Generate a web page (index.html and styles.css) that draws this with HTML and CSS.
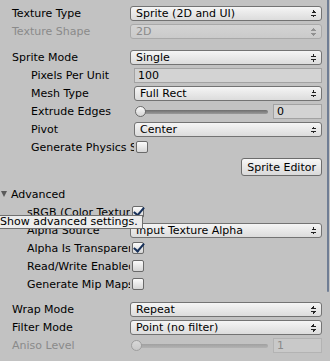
FILE: index.html
```html
<!DOCTYPE html>
<html lang="en">
<head>
  <meta charset="UTF-8">
  <title>Texture Import Settings</title>
  <link rel="stylesheet" href="styles.css">
</head>
<body>

<div class="inspector">
  <div class="row">
    <div class="label">Texture Type</div>
    <div class="popup">Sprite (2D and UI)<span class="arrows"></span></div>
  </div>
  <div class="row disabled">
    <div class="label">Texture Shape</div>
    <div class="popup">2D<span class="arrows"></span></div>
  </div>

  <div class="row gap">
    <div class="label">Sprite Mode</div>
    <div class="popup">Single<span class="arrows"></span></div>
  </div>
  <div class="row sub">
    <div class="label">Pixels Per Unit</div>
    <div class="field">100</div>
  </div>
  <div class="row sub">
    <div class="label">Mesh Type</div>
    <div class="popup">Full Rect<span class="arrows"></span></div>
  </div>
  <div class="row sub">
    <div class="label">Extrude Edges</div>
    <div class="slider"><span class="thumb"></span></div>
    <div class="field small">0</div>
  </div>
  <div class="row sub">
    <div class="label">Pivot</div>
    <div class="popup">Center<span class="arrows"></span></div>
  </div>
  <div class="row sub">
    <div class="label">Generate Physics Shape</div>
    <div class="check"></div>
  </div>
  <div class="button-row">
    <button class="btn">Sprite Editor</button>
  </div>

  <div class="foldout"><span class="tri"></span>Advanced</div>
  <div class="row adv">
    <div class="label">sRGB (Color Texture)</div>
    <div class="check on"></div>
  </div>
  <div class="row adv">
    <div class="label">Alpha Source</div>
    <div class="popup">Input Texture Alpha<span class="arrows"></span></div>
  </div>
  <div class="row adv">
    <div class="label">Alpha Is Transparency</div>
    <div class="check on"></div>
  </div>
  <div class="row adv">
    <div class="label">Read/Write Enabled</div>
    <div class="check"></div>
  </div>
  <div class="row adv">
    <div class="label">Generate Mip Maps</div>
    <div class="check"></div>
  </div>

  <div class="row gap2">
    <div class="label">Wrap Mode</div>
    <div class="popup">Repeat<span class="arrows"></span></div>
  </div>
  <div class="row">
    <div class="label">Filter Mode</div>
    <div class="popup">Point (no filter)<span class="arrows"></span></div>
  </div>
  <div class="row disabled">
    <div class="label">Aniso Level</div>
    <div class="slider"><span class="thumb"></span></div>
    <div class="field small">1</div>
  </div>

  <div class="tooltip">Show advanced settings.</div>
  <div class="scrollbar"></div>
</div>

</body>
</html>
```

FILE: styles.css
```css
* {
  box-sizing: border-box;
}

body {
  margin: 0;
  background: #c2c2c2;
  font-family: 'DejaVu Sans', Verdana, sans-serif;
  font-size: 11px;
  color: #000;
}

.inspector {
  position: relative;
  width: 330px;
  height: 361px;
  padding-top: 4px;
  overflow: hidden;
}

.row {
  display: flex;
  align-items: center;
  height: 18px;
  padding-right: 8px;
}

.row.gap {
  margin-top: 8px;
}

.row.gap2 {
  margin-top: 7px;
}

.label {
  flex: none;
  width: 130px;
  padding-left: 12px;
  white-space: nowrap;
  overflow: hidden;
}

.sub .label {
  width: 134px;
  padding-left: 31px;
}

.adv .label {
  padding-left: 27px;
}

.disabled {
  color: #8a8a8a;
}

.popup {
  position: relative;
  flex: 1;
  height: 15px;
  line-height: 13px;
  padding-left: 5px;
  border: 1px solid #737373;
  border-radius: 3px;
  background: linear-gradient(#f5f5f5, #dcdcdc);
  white-space: nowrap;
}

.disabled .popup {
  border-color: #a9a9a9;
  background: linear-gradient(#d4d4d4, #cacaca);
}

.arrows {
  position: absolute;
  right: 5px;
  top: 3px;
  width: 5px;
  height: 8px;
  background:
    linear-gradient(to bottom right, transparent 50%, #222 50%) left top / 3px 3px no-repeat,
    linear-gradient(to bottom left, transparent 50%, #222 50%) 2px 0 / 3px 3px no-repeat,
    linear-gradient(to top right, transparent 50%, #222 50%) left 5px / 3px 3px no-repeat,
    linear-gradient(to top left, transparent 50%, #222 50%) 2px 5px / 3px 3px no-repeat;
}

.disabled .arrows {
  opacity: 0.35;
}

.field {
  flex: 1;
  height: 15px;
  line-height: 13px;
  padding-left: 3px;
  border: 1px solid #a2a2a2;
  background: #d3d3d3;
}

.field.small {
  flex: none;
  width: 49px;
  margin-left: 5px;
}

.disabled .field {
  border-color: #b3b3b3;
  background: #c9c9c9;
}

.slider {
  position: relative;
  flex: 1;
  height: 11px;
}

.slider::before {
  content: "";
  position: absolute;
  left: 2px;
  right: 0;
  top: 4px;
  height: 4px;
  border-radius: 2px;
  background: linear-gradient(#6d6d6d, #9a9a9a);
}

.thumb {
  position: absolute;
  left: 1px;
  top: 0;
  width: 11px;
  height: 11px;
  border-radius: 50%;
  border: 1px solid #6b6b6b;
  background: linear-gradient(#fafafa, #d4d4d4);
}

.disabled .slider::before {
  background: linear-gradient(#a0a0a0, #b2b2b2);
}

.disabled .thumb {
  border-color: #9e9e9e;
  background: linear-gradient(#d8d8d8, #c8c8c8);
}

.check {
  position: relative;
  flex: none;
  width: 12px;
  height: 12px;
  margin-left: 2px;
  border: 1px solid #6a6a6a;
  border-radius: 2px;
  background: linear-gradient(#fbfbfb, #d6d6d6);
}

.check.on::after {
  content: "";
  position: absolute;
  left: 3px;
  top: -2px;
  width: 4px;
  height: 9px;
  border: solid #16305a;
  border-width: 0 2px 2px 0;
  transform: rotate(40deg);
}

.button-row {
  display: flex;
  justify-content: flex-end;
  padding: 2px 8px 0 0;
  height: 21px;
}

.btn {
  height: 18px;
  padding: 0 5px;
  font-family: inherit;
  font-size: 11px;
  color: #000;
  border: 1px solid #6c6c6c;
  border-radius: 3px;
  background: linear-gradient(#f7f7f7, #d9d9d9);
}

.foldout {
  display: flex;
  align-items: center;
  height: 18px;
  margin-top: 8px;
}

.tri {
  width: 0;
  height: 0;
  margin: 0 4px 0 1px;
  border-left: 3.5px solid transparent;
  border-right: 3.5px solid transparent;
  border-top: 6px solid #5a5a5a;
}

.tooltip {
  position: absolute;
  left: -4px;
  top: 215px;
  height: 14px;
  line-height: 12px;
  padding: 0 4px 0 3px;
  border: 1px solid #707070;
  background: #ececec;
  white-space: nowrap;
}

.scrollbar {
  position: absolute;
  right: 1px;
  top: 0;
  width: 2px;
  height: 292px;
  border-radius: 0 0 1px 1px;
  background: #6f7d94;
}
```
